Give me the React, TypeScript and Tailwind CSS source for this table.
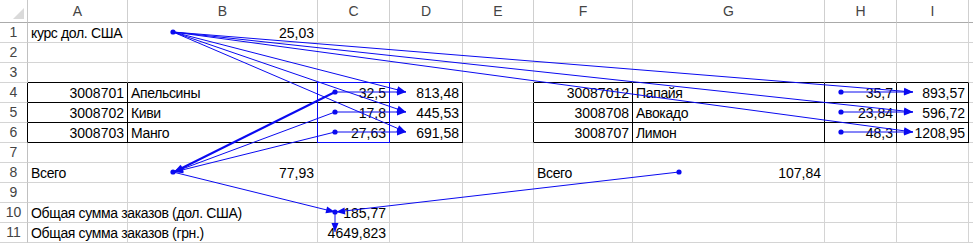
import React from "react";

type Cell = { t?: string; r?: boolean };

const COLS = ["A", "B", "C", "D", "E", "F", "G", "H", "I", ""];

const data: Record<number, Record<number, Cell>> = {
  1: { 0: { t: "курс дол. США" }, 1: { t: "25,03", r: true } },
  4: {
    0: { t: "3008701", r: true },
    1: { t: "Апельсины" },
    2: { t: "32,5", r: true },
    3: { t: "813,48", r: true },
    5: { t: "30087012", r: true },
    6: { t: "Папайя" },
    7: { t: "35,7", r: true },
    8: { t: "893,57", r: true },
  },
  5: {
    0: { t: "3008702", r: true },
    1: { t: "Киви" },
    2: { t: "17,8", r: true },
    3: { t: "445,53", r: true },
    5: { t: "3008708", r: true },
    6: { t: "Авокадо" },
    7: { t: "23,84", r: true },
    8: { t: "596,72", r: true },
  },
  6: {
    0: { t: "3008703", r: true },
    1: { t: "Манго" },
    2: { t: "27,63", r: true },
    3: { t: "691,58", r: true },
    5: { t: "3008707", r: true },
    6: { t: "Лимон" },
    7: { t: "48,3", r: true },
    8: { t: "1208,95", r: true },
  },
  8: {
    0: { t: "Всего" },
    1: { t: "77,93", r: true },
    5: { t: "Всего" },
    6: { t: "107,84", r: true },
  },
  10: { 0: { t: "Общая сумма заказов (дол. США)" }, 2: { t: "185,77", r: true } },
  11: { 0: { t: "Общая сумма заказов (грн.)" }, 2: { t: "4649,823", r: true } },
};

const bordered = (r: number, c: number) =>
  r >= 4 && r <= 6 && ((c >= 0 && c <= 3) || (c >= 5 && c <= 8));

const BLUE = "#0a0af0";

type L = [number, number, number, number];
const arrows: L[] = [
  [173, 32, 406, 92],
  [173, 32, 406, 112],
  [173, 32, 406, 132],
  [173, 32, 913, 92],
  [173, 32, 913, 112],
  [173, 32, 913, 132],
  [335, 92, 406, 92],
  [335, 112, 406, 112],
  [335, 132, 406, 132],
  [841, 92, 913, 92],
  [841, 112, 913, 112],
  [841, 132, 913, 132],
  [335, 112, 174, 172],
  [335, 132, 174, 172],
  [173, 172, 335, 212],
  [679, 172, 336, 212],
  [335, 212, 335, 232],
];
const thick: L = [335, 92, 174, 172];
const dots: [number, number][] = [
  [173, 32],
  [335, 92],
  [335, 112],
  [335, 132],
  [841, 92],
  [841, 112],
  [841, 132],
  [173, 172],
  [679, 172],
  [335, 212],
];

function head(l: L, len = 9, w = 3.5) {
  const [x1, y1, x2, y2] = l;
  const dx = x2 - x1;
  const dy = y2 - y1;
  const d = Math.hypot(dx, dy);
  const ux = dx / d;
  const uy = dy / d;
  const bx = x2 - ux * len;
  const by = y2 - uy * len;
  const nx = -uy * w;
  const ny = ux * w;
  return `${x2},${y2} ${bx + nx},${by + ny} ${bx - nx},${by - ny}`;
}

export default function App() {
  const rows = Array.from({ length: 11 }, (_, i) => i + 1);
  return (
    <div
      className="relative w-[973px] h-[243px] overflow-hidden bg-white"
      style={{ fontFamily: '"Liberation Sans", Arial, sans-serif' }}
    >
      <div className="grid grid-cols-[28px_100px_190px_72px_73px_71px_99px_192px_72px_72px_1fr] grid-rows-[23px_repeat(11,20px)]">
        {/* corner */}
        <div className="relative border-r border-b border-r-[#c8c8c8] border-b-[#ababab] bg-white">
          <svg width="27" height="22" className="absolute left-0 top-0">
            <polygon points="24,8 24,19 13,19" fill="#dadada" />
          </svg>
        </div>
        {COLS.map((c, i) => (
          <div
            key={"h" + i}
            className="flex items-center justify-center border-r border-b border-r-[#cfcfcf] border-b-[#ababab] bg-white text-[14px] text-[#444444]"
          >
            {c}
          </div>
        ))}
        {rows.map((r) => (
          <React.Fragment key={r}>
            <div
              className={
                bordered(r, 0)
                  ? "flex items-center justify-center border-r border-b border-r-black border-b-[#d4d4d4] bg-white text-[14px] text-[#444444]"
                  : "flex items-center justify-center border-r border-b border-r-[#c0c0c0] border-b-[#d4d4d4] bg-white text-[14px] text-[#444444]"
              }
            >
              {r}
            </div>
            {COLS.map((_, c) => {
              const cell = data[r]?.[c];
              const rightBlack = bordered(r, c) || bordered(r, c + 1);
              const bottomBlack = bordered(r, c) || bordered(r + 1, c);
              const rc = rightBlack ? "border-r-black" : "border-r-[#d4d4d4]";
              const bc = bottomBlack ? "border-b-black" : "border-b-[#d4d4d4]";
              return (
                <div
                  key={c}
                  className={`flex items-end overflow-visible whitespace-nowrap border-r border-b px-[3px] text-[14px] leading-4 text-black ${rc} ${bc} ${
                    cell?.r ? "justify-end" : "justify-start tracking-[-0.35px]"
                  }`}
                >
                  {cell?.t ? <span className="pb-[1px]">{cell.t}</span> : null}
                </div>
              );
            })}
          </React.Fragment>
        ))}
      </div>

      <svg
        width="973"
        height="243"
        className="pointer-events-none absolute left-0 top-0"
      >
        <rect x="317.5" y="82.5" width="72" height="60" fill="none" stroke={BLUE} strokeWidth="1" />
        {arrows.map((l, i) => (
          <line key={"l" + i} x1={l[0]} y1={l[1]} x2={l[2]} y2={l[3]} stroke={BLUE} strokeWidth="1" />
        ))}
        <line x1={thick[0]} y1={thick[1]} x2={thick[2]} y2={thick[3]} stroke={BLUE} strokeWidth="2" />
        {arrows.map((l, i) => (
          <polygon key={"p" + i} points={head(l)} fill={BLUE} />
        ))}
        <polygon points={head(thick)} fill={BLUE} />
        {dots.map((d, i) => (
          <circle key={"d" + i} cx={d[0]} cy={d[1]} r="2.6" fill={BLUE} />
        ))}
      </svg>
    </div>
  );
}
